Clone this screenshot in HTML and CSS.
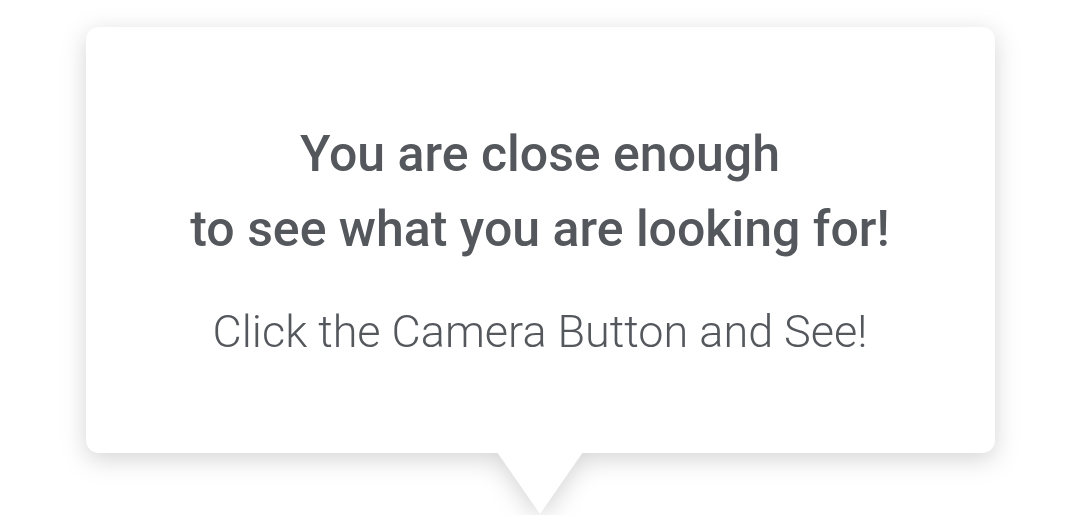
FILE: index.html
```html
<!DOCTYPE html>
<html>
<head>
<meta charset="utf-8">
<link rel="stylesheet" href="styles.css">
</head>
<body>
<div class="stage">
  <div class="bubble">
    <div class="card">
      <h1 class="title">You are close enough<br>to see what you are looking for!</h1>
      <p class="sub">Click the Camera Button and See!</p>
    </div>
    <div class="pointer"></div>
  </div>
</div>
</body>
</html>
```
FILE: styles.css
```css
html, body {
  margin: 0;
  padding: 0;
  background: #ffffff;
  width: 1080px;
  height: 515px;
  overflow: hidden;
}
.stage {
  padding-top: 27px;
  display: flex;
  justify-content: center;
}
.bubble {
  width: 909px;
  display: flex;
  flex-direction: column;
  align-items: center;
  filter: drop-shadow(0 6px 12px rgba(0, 0, 0, 0.17));
}
.card {
  width: 100%;
  height: 426px;
  box-sizing: border-box;
  background: #ffffff;
  border-radius: 13px;
  padding-top: 90px;
  text-align: center;
  font-family: Roboto, "Noto Sans", sans-serif;
  color: #54585d;
}
.title {
  margin: 0;
  font-size: 50px;
  font-weight: 500;
  line-height: 75px;
}
.sub {
  margin: 40px 0 0;
  font-size: 45px;
  font-weight: 300;
  line-height: 50px;
}
.pointer {
  width: 86px;
  height: 62px;
  background: #ffffff;
  clip-path: polygon(0 0, 100% 0, 50% 100%);
  margin-top: -1px;
}
```
